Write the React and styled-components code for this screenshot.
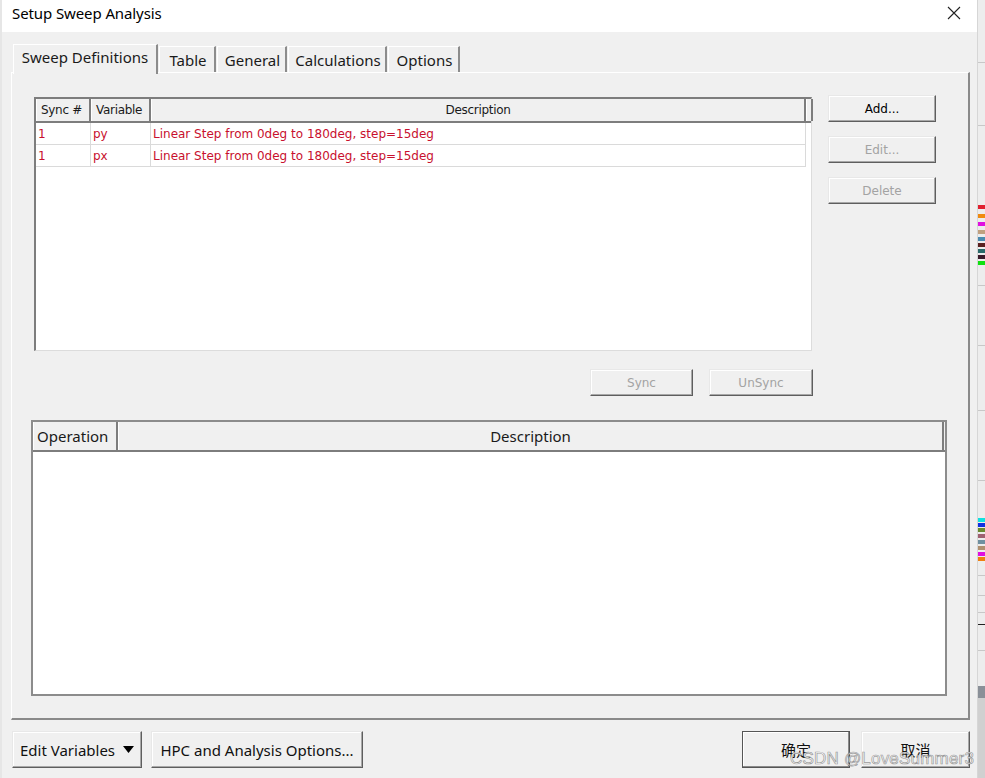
import React from 'react'
import styled, { createGlobalStyle } from 'styled-components'

const GlobalStyle = createGlobalStyle`
  html, body { margin: 0; padding: 0; }
  body {
    background: #f0f0f0;
    font-family: "Noto Sans", "Noto Sans CJK SC", sans-serif;
    color: #000;
  }
  * { box-sizing: border-box; }
`

const Screen = styled.div`
  width: 985px;
  height: 778px;
  display: flex;
  overflow: hidden;
  position: relative;
`

const EdgeStrip = styled.div`
  width: ${p => p.w}px;
  flex-shrink: 0;
  background: #e6e6e6;
`

const Dialog = styled.div`
  width: 975px;
  display: flex;
  flex-direction: column;
  background: #f0f0f0;
`

const TitleBar = styled.div`
  height: 32px;
  background: #fff;
  display: flex;
  align-items: center;
  justify-content: space-between;
  padding: 0 16px 6px 10px;
`

const Title = styled.span`
  font-size: 15px;
  letter-spacing: -0.1px;
`

const Body = styled.div`
  flex: 1;
  display: flex;
  flex-direction: column;
  padding: 12px 7px 0 9px;
`

const TabsRow = styled.div`
  height: 28px;
  display: flex;
  align-items: flex-end;
  gap: 1px;
  padding-left: 2px;
  position: relative;
  z-index: 1;
`

const Tab = styled.div`
  width: ${p => p.w}px;
  height: ${p => (p.active ? 30 : 26)}px;
  margin-bottom: ${p => (p.active ? -2 : 0)}px;
  background: #f0f0f0;
  border-top: 1px solid #fff;
  border-left: 1px solid #fff;
  border-right: 2px solid #8c8c8c;
  font-size: 15px;
  color: #1a1a1a;
  display: flex;
  align-items: ${p => (p.active ? 'flex-start' : 'center')};
  justify-content: center;
  padding-top: ${p => (p.active ? 2 : 0)}px;
  padding-left: ${p => (p.active ? 0 : 2)}px;
`

const Panel = styled.div`
  height: 648px;
  border-top: 1px solid #fff;
  border-left: 1px solid #fff;
  border-right: 2px solid #8a8a8a;
  border-bottom: 2px solid #8a8a8a;
  padding: 24px 0 0 22px;
  display: flex;
  flex-direction: column;
`

const TopSection = styled.div`
  display: flex;
  gap: 16px;
`

const ListView = styled.div`
  width: 778px;
  height: 254px;
  background: #fff;
  border-top: 2px solid #7d7d7d;
  border-left: 2px solid #7d7d7d;
  border-right: 1px solid #dcdcdc;
  border-bottom: 1px solid #dcdcdc;
  font-family: "DejaVu Sans", "Noto Sans", sans-serif;
  font-size: 12px;
`

const HeaderRow = styled.div`
  display: flex;
  height: 24px;
  background: #f0f0f0;
  border-bottom: 2px solid #7d7d7d;
`

const HeadCell = styled.div`
  width: ${p => p.w}px;
  flex-shrink: 0;
  display: flex;
  align-items: center;
  justify-content: ${p => (p.center ? 'center' : 'flex-start')};
  padding-left: ${p => (p.center ? 0 : 4)}px;
  border-right: 2px solid #7d7d7d;
  border-left: 1px solid #fff;
  color: #1a1a1a;
  letter-spacing: -0.3px;
`

const DataRow = styled.div`
  display: flex;
  height: 22px;
  width: 770px;
  border-bottom: 1px solid #dadada;
  border-right: 1px solid #dadada;
  color: #c8102e;
`

const DataCell = styled.div`
  width: ${p => p.w}px;
  flex-shrink: 0;
  display: flex;
  align-items: center;
  padding-left: 2px;
  border-right: 1px solid #dadada;
  &:last-child { border-right: none; }
`

const ButtonCol = styled.div`
  display: flex;
  flex-direction: column;
  gap: 14px;
  margin-top: -2px;
`

const WinButton = styled.button`
  width: ${p => p.w}px;
  height: ${p => p.h || 27}px;
  background: #f0f0f0;
  border: 1px solid;
  border-color: #e8e8e8 #5e5e5e #5e5e5e #e8e8e8;
  box-shadow: inset -1px -1px 0 #a8a8a8, inset 1px 1px 0 #fff;
  font-family: "DejaVu Sans", "Noto Sans", sans-serif;
  font-size: 12px;
  color: ${p => (p.disabled ? '#a3a3a3' : '#000')};
  padding: 0;
  display: flex;
  align-items: center;
  justify-content: center;
  gap: 8px;
`

const FooterButton = styled(WinButton)`
  font-family: "Noto Sans", "Noto Sans CJK SC", sans-serif;
  font-size: 15px;
  height: 37px;
  color: #111;
  ${p => p.primary && `
    border: 1px solid #555;
    box-shadow: inset -1px -1px 0 #8a8a8a, inset 1px 1px 0 #fff;
  `}
`

const SyncRow = styled.div`
  width: 779px;
  margin-top: 18px;
  display: flex;
  justify-content: flex-end;
  gap: 16px;
`

const OpTable = styled.div`
  width: 916px;
  height: 276px;
  margin-top: 24px;
  margin-left: -3px;
  background: #fff;
  border: 2px solid #8c8c8c;
`

const OpHeader = styled.div`
  display: flex;
  height: 30px;
  background: #f0f0f0;
  border-bottom: 2px solid #7d7d7d;
  font-size: 15px;
  color: #1a1a1a;
`

const OpHeadCell = styled.div`
  width: ${p => p.w}px;
  flex-shrink: 0;
  display: flex;
  align-items: center;
  justify-content: ${p => (p.center ? 'center' : 'flex-start')};
  padding-left: ${p => (p.center ? 0 : 3)}px;
  border-right: 2px solid #7d7d7d;
  border-left: 1px solid #fff;
`

const Footer = styled.div`
  margin-top: 11px;
  display: flex;
  align-items: center;
  padding-left: 1px;
`

const FooterLeft = styled.div`
  display: flex;
  gap: 9px;
`

const FooterRight = styled.div`
  margin-left: auto;
  display: flex;
  gap: 11px;
`

const Watermark = styled.div`
  position: absolute;
  left: 790px;
  top: 749px;
  font-family: "Liberation Sans", Arial, sans-serif;
  font-size: 17px;
  color: rgba(255, 255, 255, 0.9);
  -webkit-text-stroke: 0.7px rgba(110, 110, 110, 0.7);
  letter-spacing: 0.2px;
  pointer-events: none;
`

const CloseIcon = () => (
  <svg width="14" height="14" viewBox="0 0 14 14">
    <path d="M1 1 L13 13 M13 1 L1 13" stroke="#222" strokeWidth="1.1" />
  </svg>
)

const Caret = () => (
  <svg width="11" height="7" viewBox="0 0 11 7">
    <path d="M0 0 H11 L5.5 7 Z" fill="#000" />
  </svg>
)

const marks = [
  [205, '#e02030'], [214, '#f08a10'], [222, '#e010e0'], [230, '#c0a080'],
  [237, '#4a8ab0'], [243, '#5a2020'], [249, '#2a6a6a'], [255, '#3a1a2a'],
  [261, '#10e010'],
  [518, '#10e0e0'], [523, '#1030e0'], [528, '#6a8a30'], [534, '#a06070'],
  [540, '#7090a0'], [546, '#b09070'], [552, '#e010e0'], [557, '#f08010'],
]

const BackgroundApp = () => (
  <svg width="8" height="778" viewBox="0 0 8 778">
    <rect width="8" height="778" fill="#ededed" />
    <rect x="0" width="1" height="778" fill="#d6d6d6" />
    {[62, 125, 285, 345, 410, 480, 575, 595, 612, 650].map(y => (
      <rect key={y} x="1" y={y} width="7" height="1" fill="#c8c8c8" />
    ))}
    <rect x="1" y="624" width="7" height="1" fill="#222" />
    {marks.map(([y, c]) => (
      <rect key={y} x="1" y={y} width="7" height="4" fill={c} />
    ))}
    <rect x="1" y="686" width="7" height="12" fill="#8a9098" />
    <rect x="1" y="698" width="7" height="80" fill="#d0d0d0" />
  </svg>
)

const rows = [
  { sync: '1', variable: 'py', desc: 'Linear Step from 0deg to 180deg, step=15deg' },
  { sync: '1', variable: 'px', desc: 'Linear Step from 0deg to 180deg, step=15deg' },
]

const tabs = [
  { label: 'Sweep Definitions', w: 145, active: true },
  { label: 'Table', w: 57 },
  { label: 'General', w: 70 },
  { label: 'Calculations', w: 99 },
  { label: 'Options', w: 72 },
]

export default function App() {
  return (
    <Screen>
      <GlobalStyle />
      <EdgeStrip w={2} />
      <Dialog>
        <TitleBar>
          <Title>Setup Sweep Analysis</Title>
          <CloseIcon />
        </TitleBar>
        <Body>
          <TabsRow>
            {tabs.map(t => (
              <Tab key={t.label} w={t.w} active={t.active}>{t.label}</Tab>
            ))}
          </TabsRow>
          <Panel>
            <TopSection>
              <ListView>
                <HeaderRow>
                  <HeadCell w={55}>Sync #</HeadCell>
                  <HeadCell w={60}>Variable</HeadCell>
                  <HeadCell w={655} center>Description</HeadCell>
                  <HeadCell w={6} />
                </HeaderRow>
                {rows.map((r, i) => (
                  <DataRow key={i}>
                    <DataCell w={55}>{r.sync}</DataCell>
                    <DataCell w={60}>{r.variable}</DataCell>
                    <DataCell w={655}>{r.desc}</DataCell>
                  </DataRow>
                ))}
              </ListView>
              <ButtonCol>
                <WinButton w={108}>Add...</WinButton>
                <WinButton w={108} disabled>Edit...</WinButton>
                <WinButton w={108} disabled>Delete</WinButton>
              </ButtonCol>
            </TopSection>
            <SyncRow>
              <WinButton w={103} disabled>Sync</WinButton>
              <WinButton w={104} disabled>UnSync</WinButton>
            </SyncRow>
            <OpTable>
              <OpHeader>
                <OpHeadCell w={85}>Operation</OpHeadCell>
                <OpHeadCell w={826} center>Description</OpHeadCell>
              </OpHeader>
            </OpTable>
          </Panel>
          <Footer>
            <FooterLeft>
              <FooterButton w={130}>Edit Variables <Caret /></FooterButton>
              <FooterButton w={212}>HPC and Analysis Options...</FooterButton>
            </FooterLeft>
            <FooterRight>
              <FooterButton w={108} primary>确定</FooterButton>
              <FooterButton w={109}>取消</FooterButton>
            </FooterRight>
          </Footer>
        </Body>
      </Dialog>
      <BackgroundApp />
      <Watermark>CSDN @LoveSummer3</Watermark>
    </Screen>
  )
}
